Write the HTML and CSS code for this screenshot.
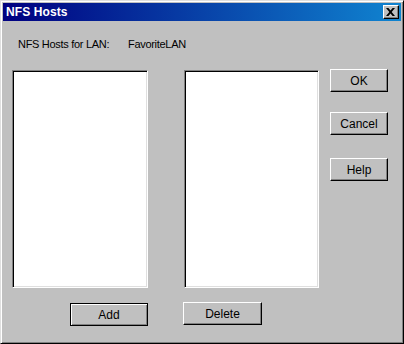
FILE: index.html
```html
<!DOCTYPE html>
<html>
<head>
<meta charset="utf-8">
<link rel="stylesheet" href="styles.css">
</head>
<body>
<div class="dialog">
  <div class="titlebar">
    <span class="title">NFS Hosts</span>
    <span class="close">
      <svg width="9" height="8" viewBox="0 0 9 8"><path d="M0 0h2.4l2.1 2.6L6.6 0H9L5.7 4 9 8H6.6L4.5 5.4 2.4 8H0l3.3-4z" fill="#000"/></svg>
    </span>
  </div>
  <div class="content">
    <div class="label-row">
      <span class="label">NFS Hosts for LAN:</span>
      <span class="value">FavoriteLAN</span>
    </div>
    <div class="main-row">
      <div class="listbox list-left"></div>
      <div class="listbox list-right"></div>
      <div class="buttons">
        <button class="btn side ok">OK</button>
        <button class="btn side cancel">Cancel</button>
        <button class="btn side help">Help</button>
      </div>
    </div>
    <div class="bottom-row">
      <button class="btn default add">Add</button>
      <button class="btn del">Delete</button>
    </div>
  </div>
</div>
</body>
</html>
```

FILE: styles.css
```css
html, body {
  margin: 0;
  padding: 0;
  background: #c0c0c0;
}
.dialog {
  width: 404px;
  height: 344px;
  box-sizing: border-box;
  background: #c0c0c0;
  border: 1px solid;
  border-color: #dfdfdf #000 #000 #dfdfdf;
  box-shadow: inset 1px 1px 0 #fff, inset -1px -1px 0 #808080;
  padding: 2px;
  font-family: "Liberation Sans", Arial, sans-serif;
  font-size: 11px;
  color: #000;
}
.titlebar {
  height: 18px;
  display: flex;
  align-items: center;
  justify-content: space-between;
  background: linear-gradient(to right, #000080, #1084d0);
  padding: 0 2px 0 3px;
}
.title {
  color: #fff;
  font-weight: bold;
  font-size: 12px;
  letter-spacing: 0.1px;
}
.close {
  width: 16px;
  height: 14px;
  box-sizing: border-box;
  background: #c0c0c0;
  border: 1px solid;
  border-color: #fff #000 #000 #fff;
  box-shadow: inset -1px -1px 0 #808080;
  display: flex;
  align-items: center;
  justify-content: center;
}
.close svg {
  display: block;
  margin-right: 1px;
}
.content {
  padding: 0 0 0 9px;
}
.label-row {
  display: flex;
  height: 13px;
  line-height: 13px;
  margin-top: 17px;
  padding-left: 6px;
  letter-spacing: -0.3px;
}
.label {
  width: 110px;
}
.main-row {
  display: flex;
  align-items: flex-start;
  margin-top: 19px;
}
.listbox {
  height: 218px;
  box-sizing: border-box;
  background: #fff;
  border: 1px solid;
  border-color: #808080 #fff #fff #808080;
  box-shadow: inset 1px 1px 0 #000, inset -1px -1px 0 #dfdfdf;
}
.list-left {
  width: 136px;
}
.list-right {
  width: 135px;
  margin-left: 36px;
}
.buttons {
  display: flex;
  flex-direction: column;
  margin-left: 11px;
  margin-top: -1px;
}
.btn {
  height: 23px;
  box-sizing: border-box;
  background: #c0c0c0;
  border: 1px solid;
  border-color: #fff #000 #000 #fff;
  box-shadow: inset -1px -1px 0 #808080;
  font-family: "Liberation Sans", Arial, sans-serif;
  font-size: 12px;
  color: #000;
  padding: 0;
  margin: 0;
}
.side {
  width: 58px;
}
.cancel {
  margin-top: 20px;
}
.help {
  margin-top: 23px;
}
.bottom-row {
  display: flex;
  align-items: flex-start;
  margin-top: 15px;
  padding-left: 58px;
}
.default {
  border-color: #000;
  box-shadow: inset 1px 1px 0 #fff, inset -1px -1px 0 #808080;
}
.add {
  width: 78px;
}
.del {
  width: 79px;
  margin-left: 35px;
  margin-top: -1px;
}
```
